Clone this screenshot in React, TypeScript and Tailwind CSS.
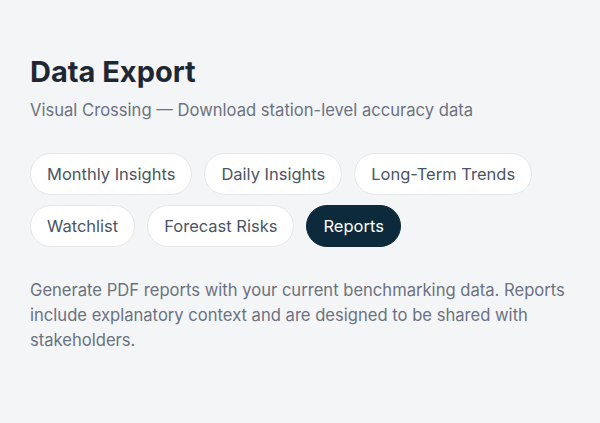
export default function App() {
  const tabs = ["Monthly Insights", "Daily Insights", "Long-Term Trends", "Watchlist", "Forecast Risks", "Reports"];
  return (
    <div className="min-h-[423px] w-[600px] bg-[#f4f5f7] px-[30px] pt-[56px] font-['Inter',sans-serif]">
      <h1 className="text-[29px] font-bold leading-[32px] text-[#1f2733]">Data Export</h1>
      <p className="mt-[10px] text-[16.6px] leading-[24px] text-[#6b7280]">Visual Crossing — Download station-level accuracy data</p>
      <div className="mt-[31px] flex flex-wrap gap-x-[12px] gap-y-[10px] w-[540px]">
        {tabs.map((t) =>
          t === "Reports" ? (
            <button key={t} className="h-[42px] rounded-full border border-[#0d2a3c] bg-[#0d2a3c] px-[16px] text-[16.5px] text-white">{t}</button>
          ) : (
            <button key={t} className="h-[42px] rounded-full border border-[#e5e7eb] bg-white px-[16px] text-[16.5px] text-[#4b5563]">{t}</button>
          )
        )}
      </div>
      <p className="mt-[31px] w-[540px] text-[16.6px] leading-[25px] text-[#6b7280]">
        Generate PDF reports with your current benchmarking data. Reports include explanatory context and are designed to be shared with stakeholders.
      </p>
    </div>
  );
}
